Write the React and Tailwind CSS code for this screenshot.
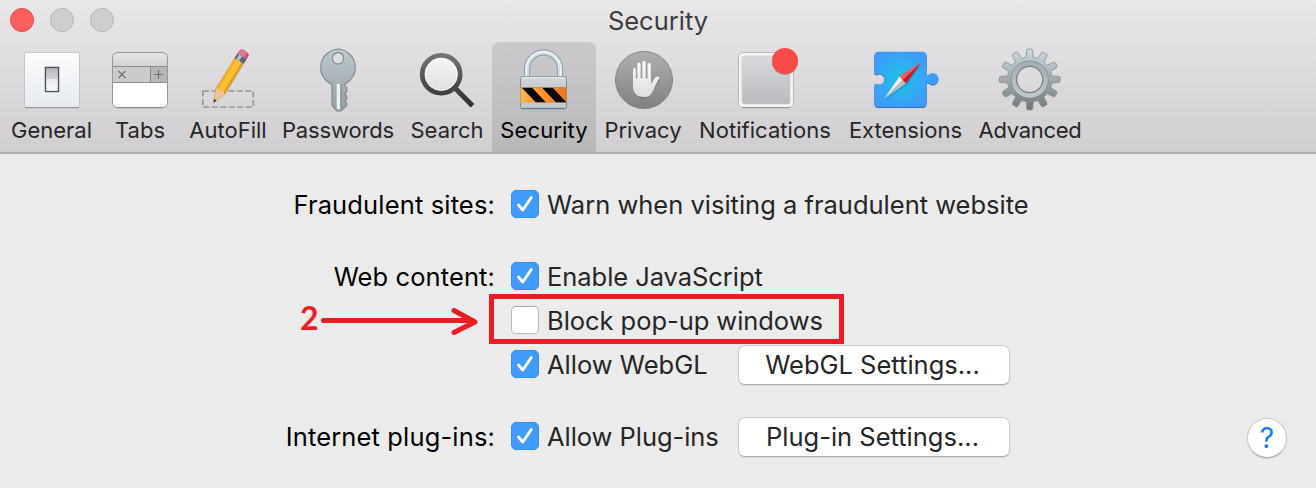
function Defs() {
  const grads = [
    ["gSwitch", 52, 108, "#fcfdfe", "#e6eaee"],
    ["gKey", 49, 112, "#bccacf", "#959da1"],
    ["gRing", 53, 108, "#777577", "#2c2c2c"],
    ["gLens", 57, 92, "#f7f7f8", "#dedde0"],
    ["gLock", 76, 109, "#d3d9db", "#a9b0b4"],
    ["gPriv", 51, 109, "#b0b0b0", "#808083"],
    ["gHand", 60, 98, "#ffffff", "#dcdcdc"],
    ["gNote", 55, 105, "#d8dade", "#b8babd"],
    ["gGear", 49, 110, "#cbdde3", "#747878"],
    ["gGearIn", 60, 98, "#a1acb0", "#c1c9cb"],
    ["gTab", 52, 66, "#e6e5e7", "#d5d3d6"],
  ];
  return (
    <svg className="absolute size-0" aria-hidden="true">
      <defs>
        {grads.map(([id, y1, y2, a, b]) => (
          <linearGradient key={id} id={id} gradientUnits="userSpaceOnUse" x1="0" x2="0" y1={y1} y2={y2}>
            <stop offset="0" stopColor={a} />
            <stop offset="1" stopColor={b} />
          </linearGradient>
        ))}
        <linearGradient id="gRocker" x1="0" x2="0" y1="0" y2="1">
          <stop offset="0" stopColor="#b4b4b8" />
          <stop offset=".46" stopColor="#d2d2d6" />
          <stop offset=".5" stopColor="#e8ebef" />
          <stop offset="1" stopColor="#f8f9fb" />
        </linearGradient>
        <linearGradient id="gOrange" x1="0" x2="1">
          <stop offset="0" stopColor="#ffb54d" />
          <stop offset=".5" stopColor="#ff9227" />
          <stop offset="1" stopColor="#ee7420" />
        </linearGradient>
        <radialGradient id="gExt" gradientUnits="userSpaceOnUse" cx="900" cy="79" r="30">
          <stop offset="0" stopColor="#20bfe6" />
          <stop offset=".5" stopColor="#2db0ee" />
          <stop offset="1" stopColor="#3e9cfb" />
        </radialGradient>
        <clipPath id="cStripe">
          <rect x="520.5" y="87.5" width="46" height="15" />
        </clipPath>
      </defs>
    </svg>
  );
}

function gearPath(cx, cy, outer, root, n) {
  const pts = [];
  for (let i = 0; i < n; i++) {
    const a = (i * 2 * Math.PI) / n;
    for (const [r, d] of [[root, -0.155], [outer - 1, -0.105], [outer, -0.07], [outer, 0.07], [outer - 1, 0.105], [root, 0.155]]) {
      pts.push((cx + r * Math.sin(a + d)).toFixed(2) + " " + (cy - r * Math.cos(a + d)).toFixed(2));
    }
  }
  return "M" + pts.join("L") + "Z";
}

const piece =
  "M878 52h44a4 4 0 0 1 4 4v17.500c0 2 1 2.500 2.500 1.300a5.600 5.600 0 1 1 0 8.400c-1.500-1.200-2.500-.700-2.500 1.300v18.500a4 4 0 0 1-4 4h-44a4 4 0 0 1-4-4V86c0-2 1.500-2.500 3-1.500a5.500 5.500 0 1 0 0-10.500c-1.500 1-3 .500-3-1.500V56a4 4 0 0 1 4-4z";

const icons = {
  General: (
    <>
      <rect x="24.5" y="52.5" width="55" height="55" rx="1.5" fill="url(#gSwitch)" stroke="#c3c5c9" />
      <path d="M25 107.7h54" stroke="#8f9397" />
      <rect x="44" y="66" width="16" height="27" rx="1" fill="#dcdee1" />
      <rect x="45.500" y="67.500" width="13" height="24" fill="url(#gRocker)" stroke="#4a4c50" strokeWidth="1.200" />
    </>
  ),
  Tabs: (
    <>
      <rect x="112.5" y="52.5" width="55" height="55" rx="5" fill="#fff" />
      <path d="M112.5 66.5V57.500a5 5 0 0 1 5-5h45a5 5 0 0 1 5 5V66.500z" fill="url(#gTab)" />
      <rect x="112.500" y="66.500" width="38" height="16" fill="#cbcacc" />
      <rect x="150.500" y="66.500" width="17" height="16" fill="#b7b5b8" />
      <path d="M112.500 66.500h55M112.500 82.500h55M150.500 66.500v16" stroke="#8d8b8e" />
      <path d="M118.500 71l7 7M125.500 71l-7 7M154 74.500h9M158.500 70v9" stroke="#6f6e71" strokeWidth="1.100" />
      <rect x="112.500" y="52.500" width="55" height="55" rx="5" fill="none" stroke="#98969a" />
      <path d="M117 107.700h46" stroke="#7f7d80" />
    </>
  ),
  AutoFill: (
    <>
      <rect x="202.800" y="91" width="50.500" height="16" fill="none" stroke="#979699" strokeWidth="1.700" strokeDasharray="6 2.500" />
      <g transform="translate(213.500 102.700) rotate(31.500)">
        <path d="M0 0L-5.200-13V-57q0-3 5.200-3t5.200 3V-13z" fill="#fdbe30" stroke="#a87a35" strokeWidth=".5" />
        <path d="M0 0L-5-13l2.500-1.500 2.500 1.500 2.500-1.500 2.500 1.500z" fill="#e9c59a" />
        <path d="M0 0L-1.300-3.500h2.600z" fill="#2b2724" />
        <path d="M-5-14V-49h2v34z" fill="#f6ad28" />
        <path d="M3-15V-49h2v35z" fill="#dd9a25" />
        <path d="M-5.300-49h10.600v-5.500H-5.300z" fill="#5c6774" />
        <path d="M-3.200-49h3.200v-5.500h-3.200z" fill="#b4c4d4" />
        <path d="M-5.300-54.500v-3q0-3.500 5.300-3.500t5.300 3.500v3z" fill="#de7398" />
        <path d="M2.500-54.500v-6q2.800.8 2.800 3v3z" fill="#bd5379" />
      </g>
    </>
  ),
  Passwords: (
    <>
      <path fillRule="evenodd" d="M338 49a18.500 18.500 0 0 1 6 35.500V84.500l2.800 3.200v4l-2.300 2.300 2.300 2.300v3l-2.300 2 2.300 2v2L341 111h-4.500L332 105.500V84.500A18.500 18.500 0 0 1 338 49zM338 52.600a5.700 5.700 0 1 0 .01 0z" fill="url(#gKey)" stroke="#7d888c" strokeWidth="1.100" />
      <path d="M336.700 84h3.600v25.500h-2l-1.600-1.500z" fill="#eef1f2" />
      <path d="M341 84v26" stroke="#848c90" strokeWidth="1.200" />
    </>
  ),
  Search: (
    <>
      <path d="M454.500 87.500l18 18.300" stroke="url(#gRing)" strokeWidth="5" />
      <circle cx="441.200" cy="74.300" r="18.900" fill="url(#gLens)" stroke="url(#gRing)" strokeWidth="4.800" />
      <circle cx="441.200" cy="74.300" r="16" fill="none" stroke="#fff" strokeOpacity=".7" />
    </>
  ),
  Security: (
    <>
      <path d="M527 77V69a16.500 16.500 0 0 1 33 0V77" fill="none" stroke="#8799a8" strokeWidth="6" />
      <path d="M527 77V69a16.500 16.500 0 0 1 33 0V77" fill="none" stroke="#d3e1e6" strokeWidth="4.200" />
      <path d="M526.300 76V69a17.200 17.200 0 0 1 34.400 0V76" fill="none" stroke="#eef6f8" strokeWidth="1.300" />
      <rect x="520.500" y="76.800" width="46" height="31.700" rx="1.800" fill="url(#gLock)" stroke="#7a8c9e" />
      <path d="M522 77.800h43" stroke="#eef2f4" />
      <rect x="520.500" y="87.500" width="46" height="15" fill="url(#gOrange)" />
      <g clipPath="url(#cStripe)" fill="#050505">
        <path d="M521.500 87.500h10.500l14 15H536z" />
        <path d="M542 87.500h10.500l14 15h-10.500z" />
      </g>
      <path d="M521 87.500h45" stroke="#8b7866" strokeOpacity=".5" />
      <rect x="521" y="103" width="45" height="4.500" fill="#c3cacf" />
      <path d="M521.500 108.700h44" stroke="#62788d" />
    </>
  ),
  Privacy: (
    <>
      <circle cx="644" cy="80" r="28.500" fill="url(#gPriv)" stroke="#858588" />
      <path d="M641 98q5 0 9-5l8-13" stroke="#707073" strokeLinecap="round" strokeWidth="3.400" opacity=".6" />
      <g stroke="url(#gHand)" strokeLinecap="round">
        <path d="M634.400 69.500L634.410 82.500" strokeWidth="2.800" />
        <path d="M639 64L639.010 82" strokeWidth="3.200" />
        <path d="M644 62.500L644.010 82" strokeWidth="3.200" />
        <path d="M649.200 64.500L649.210 82" strokeWidth="3.200" />
      </g>
      <path d="M633 78.500H650.800V83.500c2.200-1 3-5.500 6-6.700 1.500-.5 3 .2 2.800 1.200-2.500 3-4.100 8-6.100 12-2 4.500-4.500 7-9 7-6.500 0-11.500-3-11.500-11z" fill="url(#gHand)" />
    </>
  ),
  Notifications: (
    <>
      <rect x="738.500" y="52.500" width="55" height="55" rx="4.500" fill="#f5f4f2" stroke="#bab9b8" />
      <path d="M742 107.700h48" stroke="#8f8e8d" />
      <rect x="742" y="56" width="48" height="48" rx="2.500" fill="url(#gNote)" stroke="#cfcfd0" strokeWidth=".6" />
      <circle cx="785" cy="62" r="13" fill="#8d3b38" opacity=".4" />
      <circle cx="785" cy="61" r="13" fill="#f54a46" />
    </>
  ),
  Extensions: (
    <>
      <path transform="translate(0 .9)" d={piece} fill="#2369b1" />
      <path d={piece} fill="url(#gExt)" stroke="#3a8ce4" strokeWidth=".5" />
      <path d="M921.500 62.500L907 84.500 883.500 100.500z" fill="#15547a" opacity=".3" />
      <path d="M921 62L899 76.500 902 80z" fill="#ff5a5a" />
      <path d="M921 62L902 80 905.500 83.500z" fill="#d8161d" />
      <path d="M883.500 99L899 76.500 902 80z" fill="#f3f3f3" />
      <path d="M883.500 99L902 80 905.500 83.500z" fill="#bdbdbd" />
    </>
  ),
  Advanced: (
    <>
      <path fillRule="evenodd" d={gearPath(1029.7, 79.5, 30.5, 22.5, 12) + "M1029.700 66.500a13 13 0 1 0 .01 0z"} fill="url(#gGear)" stroke="#858d90" strokeWidth=".8" strokeLinejoin="round" />
      <circle cx="1029.700" cy="79.500" r="16" fill="none" stroke="url(#gGearIn)" strokeWidth="5" />
      <circle cx="1029.700" cy="79.500" r="18.700" fill="none" stroke="#7d878a" strokeOpacity=".7" />
      <circle cx="1029.700" cy="79.500" r="13.300" fill="none" stroke="#737d80" />
    </>
  ),
};

const tools = [
  ["General", 52, "w-[103px]", ""],
  ["Tabs", 140, "w-[74px]", ""],
  ["AutoFill", 228, "w-[102px]", ""],
  ["Passwords", 338, "w-[118px]", "tracking-[-0.15px]"],
  ["Search", 447, "w-[90px] ml-[5px]", ""],
  ["Security", 544, "w-[104px]", "tracking-[0.1px]"],
  ["Privacy", 643, "w-[94px]", ""],
  ["Notifications", 765, "w-[150px]", "tracking-[0.05px]"],
  ["Extensions", 905.5, "w-[131px]", ""],
  ["Advanced", 1030, "w-[118px]", "tracking-[-0.3px]"],
];

function Check({ on = true }) {
  return on ? (
    <span className="flex size-7 shrink-0 items-center justify-center rounded-[5px] border border-[#3a8ef0] bg-[#419bf9]">
      <svg viewBox="0 0 26 26" className="size-[26px]" fill="none" stroke="#fff" strokeWidth="2.900" strokeLinecap="round" strokeLinejoin="round">
        <path d="M6.500 14l4.300 5L19.300 6.500" />
      </svg>
    </span>
  ) : (
    <span className="size-7 shrink-0 rounded-[5px] border border-[#b9b9b9] border-t-[#a5a5a5] bg-white" />
  );
}

function Row({ label, text, on, button, labelStyle = "", textStyle = "", buttonStyle = "", children }) {
  return (
    <div className="relative flex h-11 items-center">
      <div className={"flex w-[495px] shrink-0 justify-end pt-[2px] whitespace-nowrap text-black " + labelStyle}>{label}</div>
      <div className="ml-4 flex w-[227px] shrink-0 items-center gap-2">
        <Check on={on} />
        <span className={"pt-[2px] whitespace-nowrap " + textStyle}>{text}</span>
      </div>
      {button && (
        <button className={"mt-[2px] flex h-10 w-[272px] items-center justify-center rounded-[7px] border border-[#c9c9c9] border-b-[#adadad] bg-white pt-px pr-[3px] whitespace-nowrap shadow-[0_1px_1px_rgba(0,0,0,0.08)] " + buttonStyle}>
          {button}
        </button>
      )}
      {children}
    </div>
  );
}

export default function App() {
  return (
    <div className="relative flex h-[488px] w-[1316px] flex-col overflow-hidden bg-[#ebebeb] font-['Inter','Liberation_Sans',sans-serif] text-[#262626]">
      <Defs />
      <header className="flex h-[154px] shrink-0 flex-col border-b-2 border-[#aeadaf] bg-linear-to-b from-[#e9e7ea] to-[#d0ced1]">
        <div className="relative flex h-[42px] shrink-0 items-center justify-center pt-px text-[25.5px] text-[#3d3c3e]">
          <div className="absolute top-2 left-[10px] flex gap-4">
            <i className="size-6 rounded-full border border-[#e04b48] bg-[#fc605c]" />
            <i className="size-6 rounded-full border border-[#b5b4b5] bg-[#cfcecf]" />
            <i className="size-6 rounded-full border border-[#b5b4b5] bg-[#cfcecf]" />
          </div>
          <span>Security</span>
        </div>
        <nav className="flex h-[110px]">
          {tools.map(([name, cx, size, tracking]) => (
            <div key={name} className={"flex shrink-0 flex-col items-center text-[22px] " + size + (name === "Security" ? " rounded-t-[7px] bg-linear-to-b from-[#cbc9cc] to-[#b9b8b9] text-black" : "")}>
              <svg viewBox={cx - 35 + " 42 70 72"} className="h-[72px] w-[70px] shrink-0" fill="none">{icons[name]}</svg>
              <span className={"leading-8 whitespace-nowrap " + tracking}>{name}</span>
            </div>
          ))}
        </nav>
      </header>
      <main className="flex flex-col pt-7 text-[25.5px]">
        <Row label="Fraudulent sites:" labelStyle="tracking-[0.15px]" text="Warn when visiting a fraudulent website" />
        <div className="mt-7">
          <Row label="Web content:" labelStyle="tracking-[0.1px]" text="Enable JavaScript" textStyle="tracking-[-0.05px]" />
          <Row label="" text="Block pop-up windows" textStyle="tracking-[-0.05px]" on={false}>
            <div className="absolute -top-1 left-[489px] h-[50px] w-[355px] border-[5px] border-[#ed1c24]" />
            <div className="absolute -top-[2px] left-[300px] flex h-11 items-center font-['Lato',sans-serif] text-[32px] font-bold text-[#ed1c24]">2</div>
            <svg className="absolute top-0 left-[315px] h-11 w-[170px]" viewBox="315 298 170 44" fill="none" stroke="#ed1c24" strokeWidth="5" strokeLinecap="round">
              <path d="M323.500 320.500H473M454 310.500L475 322 454 332.500" strokeLinejoin="round" />
            </svg>
          </Row>
          <Row label="" text="Allow WebGL" button="WebGL Settings..." />
        </div>
        <div className="mt-7">
          <Row label="Internet plug-ins:" labelStyle="tracking-[0.15px]" text="Allow Plug-ins" textStyle="tracking-[-0.05px]" button="Plug-in Settings...">
            <button className="mt-[3px] ml-[237px] flex size-10 items-center justify-center rounded-full border border-[#c9c9c9] border-b-[#adadad] bg-white pt-px text-[28px] text-[#157efb] shadow-[0_1px_1px_rgba(0,0,0,0.1)]">?</button>
          </Row>
        </div>
      </main>
    </div>
  );
}
